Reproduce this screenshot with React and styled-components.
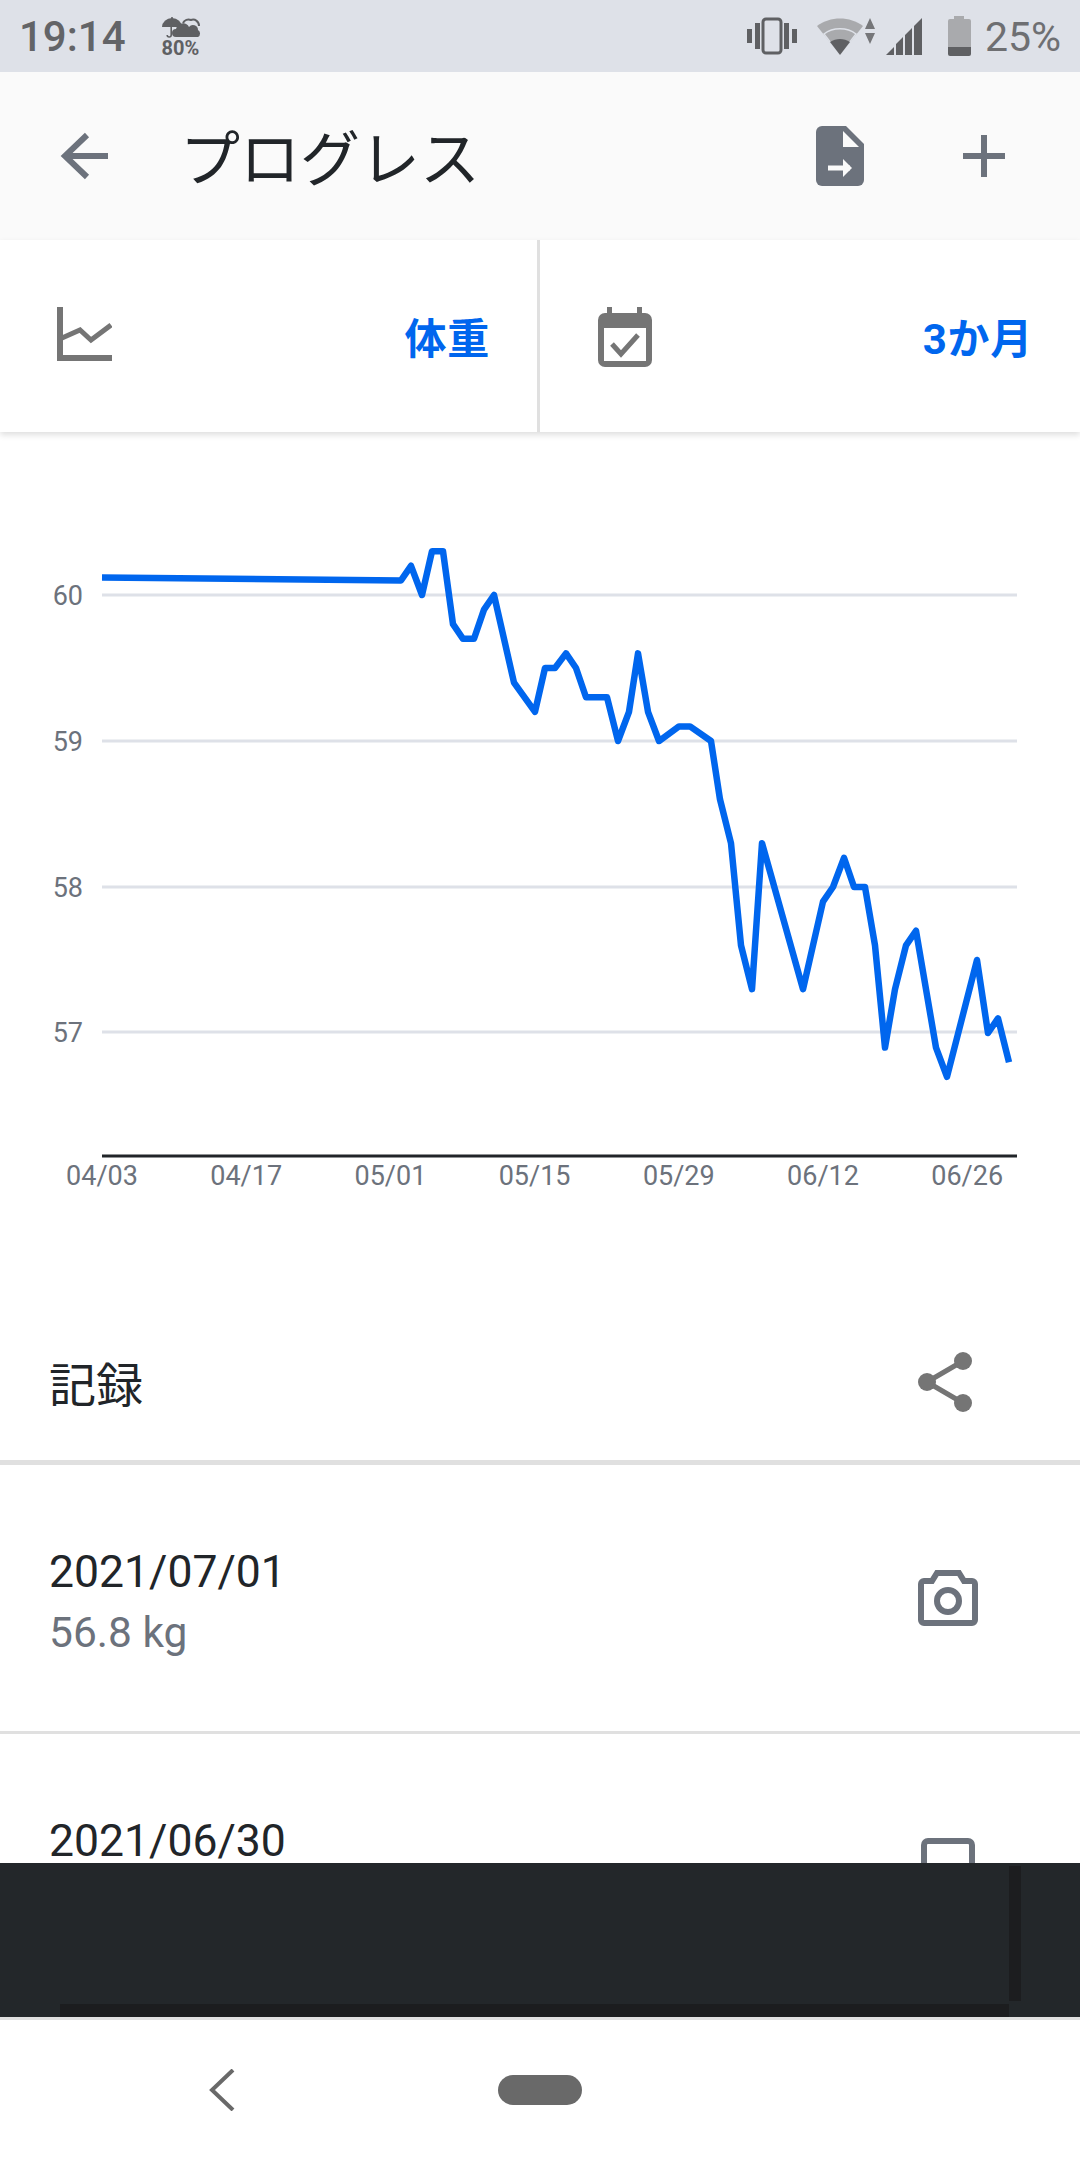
import React from "react";
import styled, { createGlobalStyle } from "styled-components";

const GlobalStyle = createGlobalStyle`
  html, body { margin: 0; padding: 0; background: #fff; }
  * { box-sizing: border-box; }
`;

const Page = styled.div`
  width: 1080px;
  height: 2160px;
  display: flex;
  flex-direction: column;
  overflow: hidden;
  background: #fff;
  font-family: Roboto, "Noto Sans CJK JP", sans-serif;
`;

const StatusBar = styled.div`
  height: 72px;
  flex: none;
  display: flex;
  align-items: center;
  padding: 0 19px 0 19px;
  background: #dee1e8;
  color: #5f6063;
`;
const Clock = styled.span`
  font-size: 42px;
  font-weight: 500;
  line-height: 72px;
  margin-top: 2px;
  color: #636467;
`;
const Weather = styled.div`
  display: flex;
  flex-direction: column;
  align-items: flex-start;
  margin-left: 36px;
  padding-top: 2px;
`;
const WeatherText = styled.span`
  font-size: 20px;
  font-weight: 700;
  line-height: 20px;
  margin-top: -1px;
`;
const StatusIcons = styled.div`
  margin-left: auto;
  display: flex;
  align-items: center;
`;
const Percent = styled.span`
  font-size: 41px;
  line-height: 72px;
  color: #6e6f72;
  margin-left: 14px;
  margin-top: 2px;
`;

const AppBar = styled.div`
  height: 168px;
  flex: none;
  display: flex;
  align-items: center;
  padding: 0 75px 0 60px;
  background: #fafafa;
`;
const Title = styled.h1`
  margin: 10px 0 0 72px;
  font-size: 60px;
  font-weight: 400;
  line-height: 84px;
  color: #212529;
`;
const AppActions = styled.div`
  margin-left: auto;
  display: flex;
  align-items: center;
  gap: 99px;
`;

const Tabs = styled.div`
  height: 192px;
  flex: none;
  display: flex;
  background: #fff;
  box-shadow: 0 3px 6px rgba(0, 0, 0, 0.13);
  position: relative;
`;
const Tab = styled.div`
  width: ${(p) => p.$w}px;
  display: flex;
  align-items: center;
  justify-content: space-between;
  padding: 0 47px 4px ${(p) => p.$pad}px;
  border-right: ${(p) => (p.$divided ? "3px solid #e0e0e0" : "none")};
`;
const TabValue = styled.span`
  font-size: 42px;
  font-weight: 700;
  line-height: 60px;
  letter-spacing: 0.7px;
  margin-top: 12px;
  color: #0066ee;
`;

const Content = styled.div`
  flex: 1;
  min-height: 0;
  overflow: hidden;
`;
const ChartSvg = styled.svg`
  display: block;
  width: 1080px;
  height: 908px;
`;
const SectionHead = styled.div`
  height: 125px;
  display: flex;
  align-items: center;
  justify-content: space-between;
  padding: 0 108px 29px 49px;
  border-bottom: 5px solid #e0e0e0;
`;
const SectionTitle = styled.span`
  font-size: 47px;
  line-height: 64px;
  color: #212529;
`;
const Row = styled.div`
  height: ${(p) => p.$h}px;
  display: flex;
  justify-content: space-between;
  padding: 84px ${(p) => p.$right}px 0 49px;
  border-bottom: 3px solid #e0e0e0;
`;
const RowText = styled.div`
  display: flex;
  flex-direction: column;
`;
const RowDate = styled.span`
  font-size: 44.5px;
  line-height: 46px;
  color: #212529;
`;
const RowWeight = styled.span`
  font-size: 42.5px;
  line-height: 60px;
  margin-top: 8px;
  color: #6c727c;
`;

const Banner = styled.div`
  height: 154px;
  flex: none;
  display: grid;
  grid-template-columns: 60px 949px 12px 1fr;
  grid-template-rows: 3px 135px 3px 13px;
  background: #23272a;
`;
const StripV = styled.div`
  grid-column: 3;
  grid-row: 2;
  background: #1c1d1f;
`;
const StripH = styled.div`
  grid-column: 2;
  grid-row: 4;
  background: #1c1d1f;
`;

const NavBar = styled.div`
  height: 143px;
  flex: none;
  display: flex;
  align-items: center;
  padding: 0 0 0 208px;
  background: #fff;
  border-top: 3px solid #e0e0e0;
`;
const Pill = styled.div`
  width: 84px;
  height: 30px;
  margin-left: 262px;
  border-radius: 15px;
  background: #696969;
`;

const gridY = [
  { label: "60", y: 595 },
  { label: "59", y: 741 },
  { label: "58", y: 887 },
  { label: "57", y: 1032 },
];
const dates = ["04/03", "04/17", "05/01", "05/15", "05/29", "06/12", "06/26"];

const yOf = (v) => 595 + (60 - v) * 146;
const weights = [
  [102, 60.12], [401, 60.1], [411, 60.2], [422, 60], [432, 60.3], [443, 60.3], [453, 59.8],
  [463, 59.7], [474, 59.7], [484, 59.9], [494, 60], [514, 59.4], [535, 59.2], [545, 59.5],
  [555, 59.5], [566, 59.6], [576, 59.5], [586, 59.3], [607, 59.3], [618, 59], [629, 59.2],
  [638, 59.6], [648, 59.2], [659, 59], [679, 59.1], [690, 59.1], [711, 59], [720, 58.6],
  [731, 58.3], [741, 57.6], [752, 57.3], [762, 58.3], [803, 57.3], [813, 57.6], [823, 57.9],
  [833, 58], [844, 58.2], [854, 58], [865, 58], [875, 57.6], [885, 56.9], [895, 57.3],
  [906, 57.6], [916, 57.7], [936, 56.9], [947, 56.7], [977, 57.5], [988, 57], [998, 57.1],
  [1009, 56.8],
];

const WeightChart = () => (
  <ChartSvg viewBox="0 432 1080 908">
    {gridY.map((g) => (
      <g key={g.label}>
        <line x1="102" x2="1017" y1={g.y} y2={g.y} stroke="#dee1e8" strokeWidth="3" />
        <text x="83" y={g.y + 10} textAnchor="end" fontSize="27" fill="#6c727c">{g.label}</text>
      </g>
    ))}
    <polyline
      points={weights.map(([x, v]) => `${x},${yOf(v)}`).join(" ")}
      fill="none"
      stroke="#0066ee"
      strokeWidth="6.5"
      strokeLinejoin="round"
    />
    <line x1="102" x2="1017" y1="1156" y2="1156" stroke="#212529" strokeWidth="3" />
    {dates.map((d, i) => (
      <text key={d} x={102 + i * 144.2} y="1185" textAnchor="middle" fontSize="27" fill="#6c727c">{d}</text>
    ))}
  </ChartSvg>
);

export default function App() {
  return (
    <Page>
      <GlobalStyle />
      <StatusBar>
        <Clock>19:14</Clock>
        <Weather>
          <svg width="40" height="22" viewBox="0 0 40 22" fill="#5f6063">
            <path d="M0 10a10 9 0 0 1 20 0z" />
            <rect x="9.2" y="0" width="1.6" height="3" />
            <path d="M9.2 10v8a2 2 0 0 1-4 0" fill="none" stroke="#5f6063" strokeWidth="1.6" />
            <path d="M14 20a4 4 0 0 1 0-8 7 7 0 0 1 13-2 5 5 0 0 1 9 3 4 4 0 0 1 0 7z" />
            <path d="M21 6a6 6 0 0 1 8-3 6 6 0 0 1 8 6" fill="none" stroke="#5f6063" strokeWidth="2" />
          </svg>
          <WeatherText>80%</WeatherText>
        </Weather>
        <StatusIcons>
          <svg width="50" height="38" viewBox="0 0 50 38" fill="#5f6063">
            <rect x="0" y="12" width="5" height="14" />
            <rect x="8" y="6" width="5" height="26" />
            <rect x="37" y="6" width="5" height="26" />
            <rect x="45" y="12" width="5" height="14" />
            <rect x="16" y="2" width="18" height="34" rx="3" fill="none" stroke="#5f6063" strokeWidth="3" />
          </svg>
          <svg width="60" height="38" viewBox="0 0 60 38" style={{ marginLeft: 20 }}>
            <path d="M0 9C13-1 33-1 46 9L23 38z" fill="#a9aaad" />
            <path d="M7 17c9-7 23-7 32 0L23 38z" fill="#a9aaad" stroke="#dee1e8" strokeWidth="1.5" />
            <path d="M13 25c6-4 14-4 20 0L23 38z" fill="#5f6063" />
            <path d="M53 1l5 11H48zM53 27l5-11H48z" fill="#757679" />
          </svg>
          <svg width="37" height="37" viewBox="0 0 37 37" fill="#5f6063" style={{ marginLeft: 9 }}>
            <path d="M0 37l8-8v8zM10 37V26l7-7v18zM19 37V17l7-7v27zM28 37V8l8-8v37z" />
          </svg>
          <svg width="23" height="40" viewBox="0 0 23 40" style={{ marginLeft: 25 }}>
            <path d="M6 0h10v3h5a2 2 0 0 1 2 2v26H0V5a2 2 0 0 1 2-2h4z" fill="#a9aaad" />
            <path d="M0 31h23v7a2 2 0 0 1-2 2H2a2 2 0 0 1-2-2z" fill="#5f6063" />
          </svg>
          <Percent>25%</Percent>
        </StatusIcons>
      </StatusBar>

      <AppBar>
        <svg width="48" height="48" viewBox="0 0 48 48" fill="none" stroke="#6c727c" strokeWidth="6">
          <path d="M48 24H5M27 3L5 24l22 21" />
        </svg>
        <Title>プログレス</Title>
        <AppActions>
          <svg width="48" height="60" viewBox="0 0 48 60">
            <path d="M6 0h24l18 18v36a6 6 0 0 1-6 6H6a6 6 0 0 1-6-6V6a6 6 0 0 1 6-6z" fill="#6c727c" />
            <path d="M27 5v16h16z" fill="#fafafa" />
            <path d="M12 42h22" stroke="#fafafa" strokeWidth="5" />
            <path d="M27 33l9 9-9 9z" fill="#fafafa" />
          </svg>
          <svg width="42" height="42" viewBox="0 0 42 42" stroke="#6c727c" strokeWidth="6">
            <path d="M0 21h42M21 0v42" />
          </svg>
        </AppActions>
      </AppBar>

      <Tabs>
        <Tab $w={540} $pad={57} $divided>
          <svg width="55" height="54" viewBox="0 0 55 54" fill="none" stroke="#757575">
            <path d="M3 0v51h52" strokeWidth="6" />
            <path d="M5 31l18-8 11 10 20-15" strokeWidth="5" />
          </svg>
          <TabValue>体重</TabValue>
        </Tab>
        <Tab $w={540} $pad={58}>
          <svg width="54" height="60" viewBox="0 0 54 60" style={{ marginTop: 6 }}>
            <rect x="9" y="0" width="5" height="10" fill="#757575" />
            <rect x="39" y="0" width="5" height="10" fill="#757575" />
            <rect x="0" y="6" width="54" height="54" rx="7" fill="#757575" />
            <rect x="6" y="21" width="42" height="33" fill="#fff" />
            <path d="M14 37l9 10 17-19" fill="none" stroke="#757575" strokeWidth="5" />
          </svg>
          <TabValue>3か月</TabValue>
        </Tab>
      </Tabs>

      <Content>
        <WeightChart />
        <SectionHead>
          <SectionTitle>記録</SectionTitle>
          <svg width="54" height="60" viewBox="0 0 54 60" fill="#757575" style={{ marginBottom: 8 }}>
            <path d="M9 30L45 9M9 30l36 21" strokeWidth="5" stroke="#757575" fill="none" />
            <circle cx="9" cy="30" r="9" />
            <circle cx="45" cy="9" r="9" />
            <circle cx="45" cy="51" r="9" />
          </svg>
        </SectionHead>
        <Row $h={269} $right={102}>
          <RowText>
            <RowDate>2021/07/01</RowDate>
            <RowWeight>56.8 kg</RowWeight>
          </RowText>
          <svg width="60" height="56" viewBox="0 0 60 56" fill="none" stroke="#6c727c" strokeWidth="6" style={{ marginTop: 21 }}>
            <path d="M19 3h22l5 8h8a3 3 0 0 1 3 3v36a3 3 0 0 1-3 3H6a3 3 0 0 1-3-3V14a3 3 0 0 1 3-3h8z" />
            <circle cx="30" cy="31" r="11" />
          </svg>
        </Row>
        <Row $h={200} $right={105}>
          <RowText>
            <RowDate>2021/06/30</RowDate>
          </RowText>
          <svg width="54" height="56" viewBox="0 0 54 56" fill="none" stroke="#6c727c" strokeWidth="6" style={{ marginTop: 20 }}>
            <rect x="3" y="3" width="48" height="50" rx="4" />
          </svg>
        </Row>
      </Content>

      <Banner>
        <StripV />
        <StripH />
      </Banner>

      <NavBar>
        <svg width="28" height="42" viewBox="0 0 28 42" fill="none" stroke="#696969" strokeWidth="4">
          <path d="M25 1L4 21l21 20" />
        </svg>
        <Pill />
      </NavBar>
    </Page>
  );
}
